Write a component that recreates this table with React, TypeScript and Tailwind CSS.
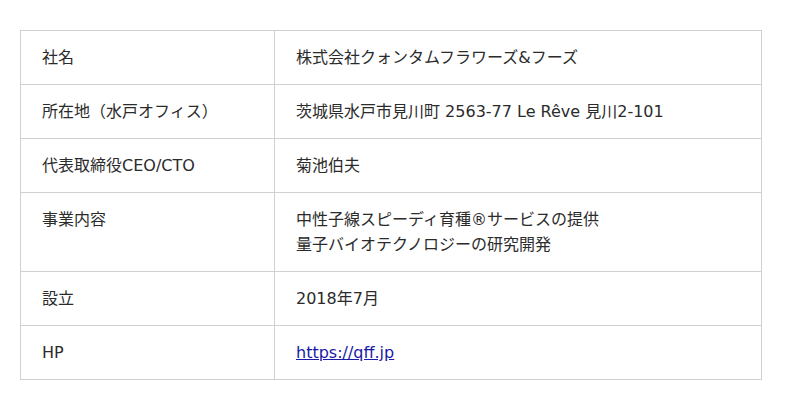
const rows: { label: string; value: React.ReactNode }[] = [
  { label: "社名", value: "株式会社クォンタムフラワーズ&フーズ" },
  { label: "所在地（水戸オフィス）", value: "茨城県水戸市見川町 2563-77 Le Rêve 見川2-101" },
  { label: "代表取締役CEO/CTO", value: "菊池伯夫" },
  {
    label: "事業内容",
    value: (
      <>
        中性子線スピーディ育種®サービスの提供
        <br />
        量子バイオテクノロジーの研究開発
      </>
    ),
  },
  { label: "設立", value: "2018年7月" },
  {
    label: "HP",
    value: (
      <a href="https://qff.jp" className="text-[#1a1aa6] underline">
        https://qff.jp
      </a>
    ),
  },
];

export default function App() {
  return (
    <div className="w-[800px] h-[410px] bg-white px-5 pt-[30px] font-['DejaVu_Sans','Noto_Sans_CJK_JP',sans-serif] text-[16px] leading-[25px] text-[#2b2b2b]">
      <table className="w-[742px] border-collapse">
        <tbody>
          {rows.map((r) => (
            <tr key={r.label}>
              <td className="w-[254px] border border-[#d0d0d0] px-[21px] py-[14px] align-top">{r.label}</td>
              <td className="border border-[#d0d0d0] px-[21px] py-[14px] align-top">{r.value}</td>
            </tr>
          ))}
        </tbody>
      </table>
    </div>
  );
}
